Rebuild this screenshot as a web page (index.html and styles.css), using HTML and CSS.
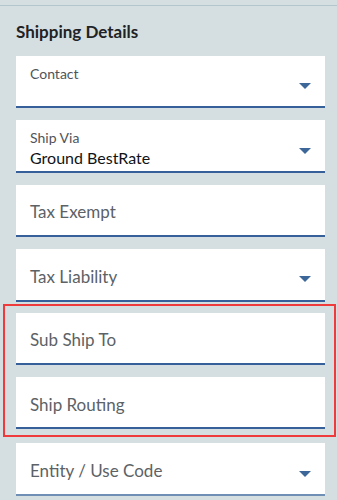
FILE: index.html
```html
<!DOCTYPE html>
<html lang="en">
<head>
  <meta charset="UTF-8">
  <meta name="viewport" content="width=device-width, initial-scale=1.0">
  <title>Shipping Details</title>
  <link rel="stylesheet" href="styles.css">
</head>
<body>
  <div class="topbar"></div>

  <div class="panel">
    <h2>Shipping Details</h2>

    <div class="fields">
      <div class="field select">
        <div class="field-text">
          <div class="label">Contact</div>
        </div>
        <span class="caret"></span>
      </div>

      <div class="field select">
        <div class="field-text">
          <div class="label">Ship Via</div>
          <div class="value">Ground BestRate</div>
        </div>
        <span class="caret"></span>
      </div>

      <div class="field">
        <div class="placeholder">Tax Exempt</div>
      </div>

      <div class="field select">
        <div class="placeholder">Tax Liability</div>
        <span class="caret"></span>
      </div>

      <div class="highlight">
        <div class="field">
          <div class="placeholder">Sub Ship To</div>
        </div>
        <div class="field">
          <div class="placeholder">Ship Routing</div>
        </div>
      </div>

      <div class="field select muted">
        <div class="placeholder">Entity / Use Code</div>
        <span class="caret"></span>
      </div>
    </div>
  </div>
</body>
</html>
```

FILE: styles.css
```css
body {
  margin: 0;
  background: #d5dfe2;
  font-family: Lato, "Liberation Sans", sans-serif;
  color: #222;
}
.topbar {
  height: 5px;
  border-bottom: 1px solid #b3c5cd;
}
.panel {
  padding: 15px 12px 0 16px;
}
h2 {
  margin: 0 0 13px;
  font-size: 17px;
  line-height: 22px;
  font-weight: bold;
  color: #1f2326;
}
.fields {
  display: flex;
  flex-direction: column;
  gap: 12px;
}
.field {
  flex-shrink: 0;
  height: 50.4px;
  background: white;
  border-bottom: 2px solid #35609a;
  display: flex;
  align-items: center;
  padding: 0 14px;
}
.field.muted {
  border-bottom-color: #6f8fb5;
}
.field-text {
  flex: 1;
  align-self: flex-start;
  padding-top: 8px;
}
.label {
  font-size: 14px;
  line-height: 20px;
  color: #4f5458;
}
.value {
  font-size: 16px;
  line-height: 20px;
  color: #111416;
}
.placeholder {
  flex: 1;
  padding-top: 4px;
  font-size: 17px;
  color: #5c6266;
}
.caret {
  width: 0;
  height: 0;
  margin-top: 10px;
  border-left: 6.5px solid transparent;
  border-right: 6.5px solid transparent;
  border-top: 6px solid #3d6699;
}
.highlight {
  display: flex;
  flex-direction: column;
  gap: 12px;
  margin: -10px -11px -6px -13px;
  padding: 7px 9px 6px 11px;
  border: 2px solid #ef3b3b;
}
```
